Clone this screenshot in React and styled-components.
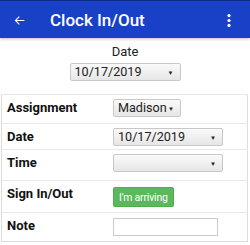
import { styled, createGlobalStyle } from "styled-components";

const GlobalStyle = createGlobalStyle`
  body {
    margin: 0;
    background: #fff;
    font-family: Roboto, "Liberation Sans", sans-serif;
    color: #222;
  }
`;

const Select = ({ value, width }) => (
  <SelectBox $width={width}>
    <SelectText>{value}</SelectText>
    <Arrow>▼</Arrow>
  </SelectBox>
);

const App = () => {
  return (
    <Page>
      <GlobalStyle />
      <Header>
        <IconButton>
          <svg width="13" height="13" viewBox="0 0 24 24">
            <path
              d="M21 11H6.8l5.6-5.6L11 4l-8 8 8 8 1.4-1.4L6.8 13H21z"
              fill="#fff"
            />
          </svg>
        </IconButton>
        <Title>Clock In/Out</Title>
        <Menu>
          <svg width="4" height="13" viewBox="0 0 4 13">
            <circle cx="2" cy="1.6" r="1.6" fill="#fff" />
            <circle cx="2" cy="6.5" r="1.6" fill="#fff" />
            <circle cx="2" cy="11.4" r="1.6" fill="#fff" />
          </svg>
        </Menu>
      </Header>

      <TopDate>
        <Caption>Date</Caption>
        <Select value="10/17/2019" width={111} />
      </TopDate>

      <Table>
        <tbody>
          <Row $h={29}>
            <Label>Assignment</Label>
            <Cell>
              <Select value="Madison" width={68} />
            </Cell>
          </Row>
          <Row $h={26}>
            <Label>Date</Label>
            <Cell>
              <Select value="10/17/2019" width={110} />
            </Cell>
          </Row>
          <Row $h={31}>
            <Label>Time</Label>
            <Cell>
              <Select value="" width={110} />
            </Cell>
          </Row>
          <Row $h={32}>
            <Label>Sign In/Out</Label>
            <Cell>
              <GreenButton>I'm arriving</GreenButton>
            </Cell>
          </Row>
          <Row $h={29}>
            <Label>Note</Label>
            <Cell>
              <NoteInput />
            </Cell>
          </Row>
        </tbody>
      </Table>
    </Page>
  );
};

const Page = styled.div`
  width: 250px;
  height: 245px;
  overflow: hidden;
`;

const Header = styled.div`
  height: 38px;
  background: #1841c8;
  border-top: 1px solid #0d2a8a;
  box-sizing: border-box;
  display: flex;
  align-items: center;
  box-shadow: 0 1px 3px rgba(0, 0, 0, 0.25);
  position: relative;
`;

const IconButton = styled.div`
  width: 50px;
  display: flex;
  align-items: center;
  padding-left: 13px;
  box-sizing: border-box;
  padding-top: 2px;
`;

const Title = styled.div`
  flex: 1;
  color: #fff;
  font-size: 17px;
  font-weight: 500;
  padding-top: 1px;
`;

const Menu = styled.div`
  width: 23px;
  display: flex;
  padding-top: 2px;
`;

const TopDate = styled.div`
  display: flex;
  flex-direction: column;
  align-items: center;
  padding-top: 6px;
  gap: 4px;
`;

const Caption = styled.div`
  font-size: 13px;
  color: #222;
  line-height: 15px;
`;

const SelectBox = styled.div`
  position: relative;
  width: ${(p) => p.$width}px;
  height: 18px;
  box-sizing: border-box;
  border: 1px solid #c8c8c8;
  border-radius: 2px;
  background: linear-gradient(#fafafa, #e6e6e6);
  font-size: 12.6px;
  line-height: 16px;
  padding: 0 13px 0 4px;
  color: #222;
  display: flex;
`;

const SelectText = styled.span`
  white-space: nowrap;
  overflow: hidden;
`;

const Arrow = styled.span`
  position: absolute;
  right: 6px;
  top: 1px;
  font-size: 6px;
  color: #222;
`;

const Table = styled.table`
  margin: 13px 2px 0 1px;
  width: 247px;
  border-collapse: collapse;
  border: 1px solid #dcdcdc;
`;

const Row = styled.tr`
  height: ${(p) => p.$h}px;
  border-top: 1px solid #e8e8e8;
`;

const Label = styled.td`
  width: 106px;
  padding: 5px 0 0 5px;
  vertical-align: top;
  font-size: 13px;
  font-weight: bold;
  color: #111;
`;

const Cell = styled.td`
  padding: 4px 0 0 0;
  vertical-align: top;
`;

const GreenButton = styled.div`
  display: inline-block;
  margin-top: 2px;
  background: #5cb85c;
  border: 1px solid #4cae4c;
  border-radius: 2px;
  color: #fff;
  font-size: 10.5px;
  letter-spacing: -0.2px;
  padding: 0 5px;
  height: 20px;
  line-height: 19px;
  box-sizing: border-box;
`;

const NoteInput = styled.div`
  margin-top: 1px;
  width: 105px;
  height: 18px;
  box-sizing: border-box;
  border: 1px solid #ccc;
  background: #fff;
`;

export default App;
